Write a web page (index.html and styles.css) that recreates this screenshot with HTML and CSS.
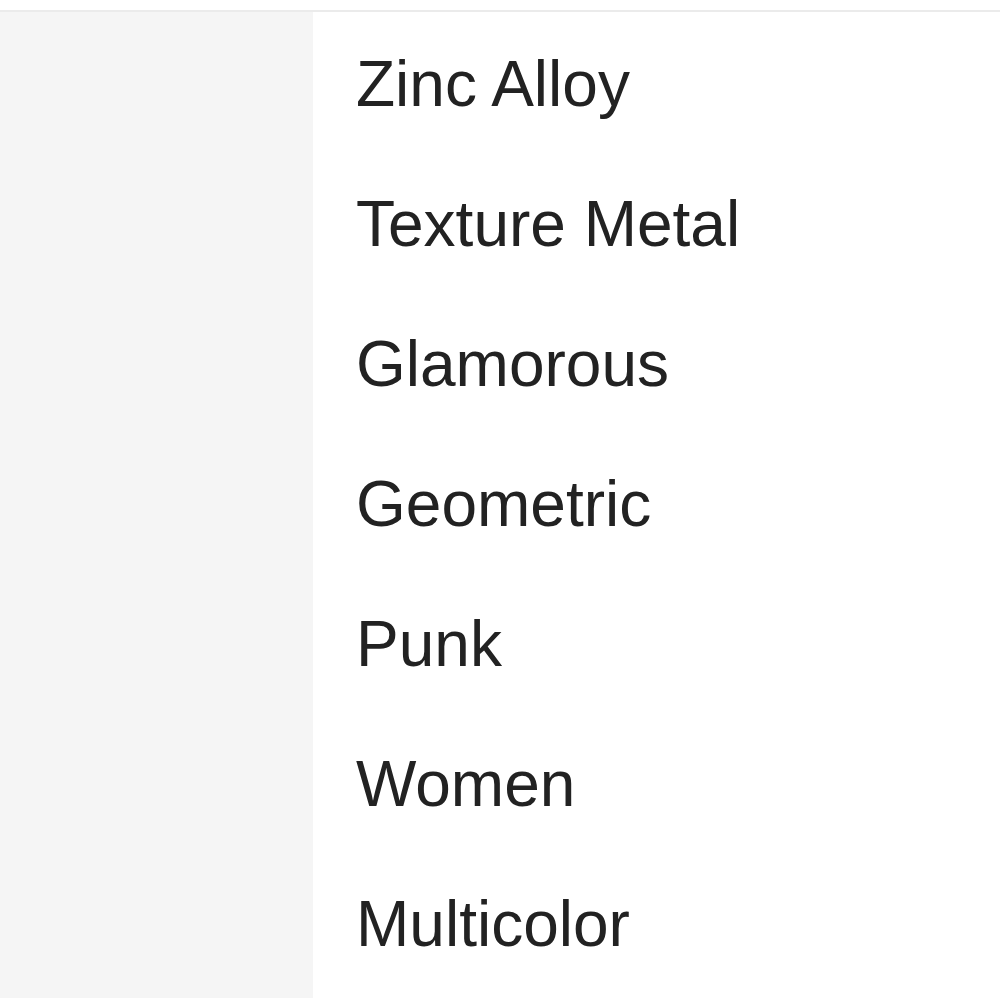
FILE: index.html
```html
<!DOCTYPE html>
<html>
<head>
<meta charset="utf-8">
<link rel="stylesheet" href="styles.css">
</head>
<body>
<div class="page">
  <div class="layout">
    <aside class="side"></aside>
    <ul class="list">
      <li class="item">Zinc Alloy</li>
      <li class="item">Texture Metal</li>
      <li class="item">Glamorous</li>
      <li class="item">Geometric</li>
      <li class="item">Punk</li>
      <li class="item">Women</li>
      <li class="item">Multicolor</li>
    </ul>
  </div>
</div>
</body>
</html>
```
FILE: styles.css
```css
html, body {
  margin: 0;
  padding: 0;
  background: #ffffff;
}
.page {
  padding-top: 10px;
  height: 998px;
  box-sizing: border-box;
}
.layout {
  display: flex;
  border-top: 2px solid #ebebeb;
  height: 988px;
  box-sizing: border-box;
}
.side {
  width: 313px;
  flex: none;
  background: #f5f5f5;
}
.list {
  list-style: none;
  margin: 0;
  padding: 2px 0 0 43px;
  flex: 1;
}
.item {
  height: 140px;
  line-height: 140px;
  font-family: "Liberation Sans", Arial, sans-serif;
  font-size: 64px;
  color: #222222;
  white-space: nowrap;
}
```
